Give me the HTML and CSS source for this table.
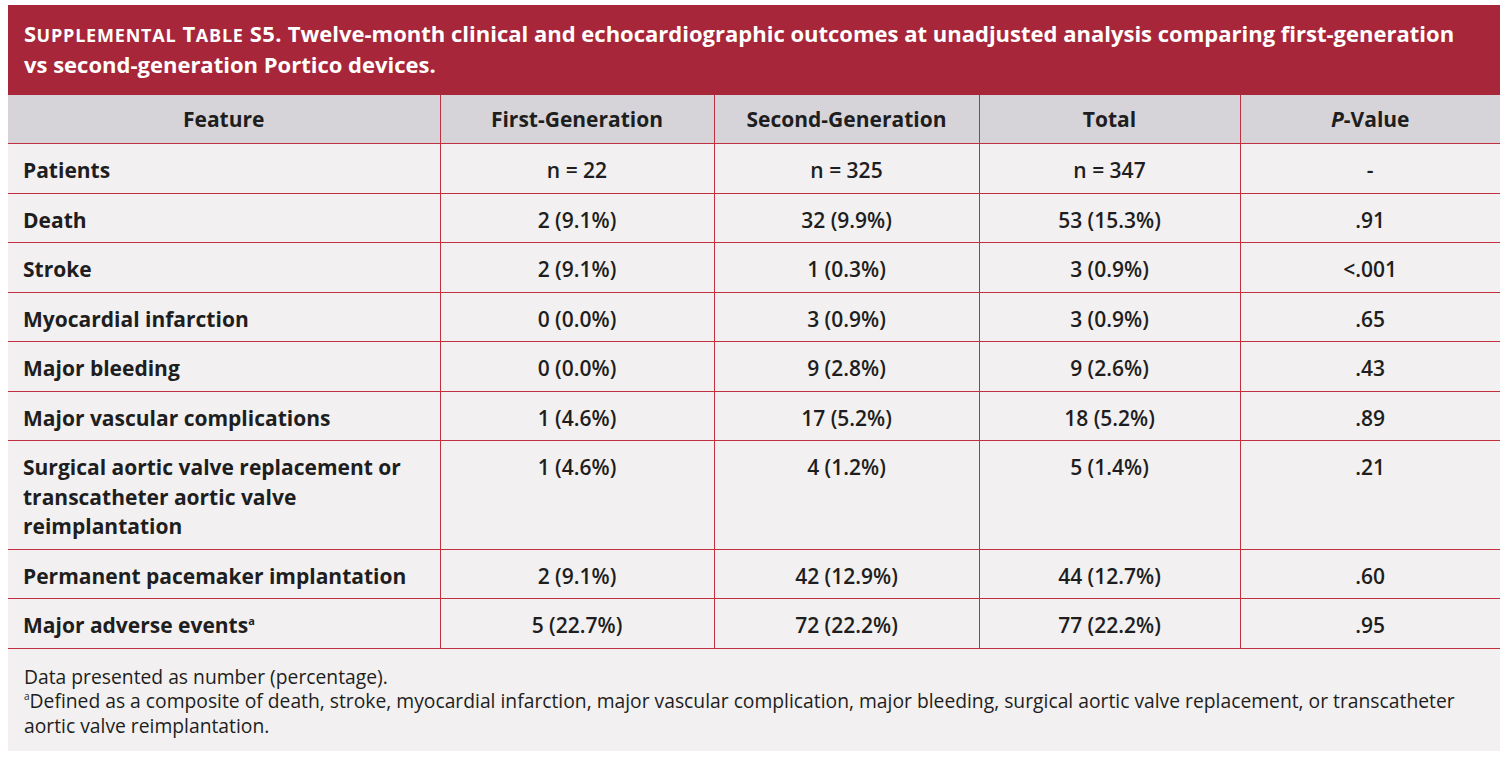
FILE: index.html
```html
<!DOCTYPE html>
<html lang="en">
<head>
<meta charset="utf-8">
<title>Supplemental Table S5</title>
<link rel="stylesheet" href="styles.css">
</head>
<body>
<div class="panel">
  <div class="title"><span class="sc">S<small>UPPLEMENTAL</small> T<small>ABLE</small> S5.</span> Twelve-month clinical and echocardiographic outcomes at unadjusted analysis comparing first-generation vs second-generation Portico devices.</div>
  <table class="grid">
    <colgroup>
      <col class="c1"><col class="c2"><col class="c3"><col class="c4"><col class="c5">
    </colgroup>
    <thead>
      <tr><th>Feature</th><th>First-Generation</th><th>Second-Generation</th><th>Total</th><th><i>P</i>-Value</th></tr>
    </thead>
    <tbody>
      <tr class="first"><td class="lab">Patients</td><td>n = 22</td><td>n = 325</td><td>n = 347</td><td>-</td></tr>
      <tr><td class="lab">Death</td><td>2 (9.1%)</td><td>32 (9.9%)</td><td>53 (15.3%)</td><td>.91</td></tr>
      <tr><td class="lab">Stroke</td><td>2 (9.1%)</td><td>1 (0.3%)</td><td>3 (0.9%)</td><td>&lt;.001</td></tr>
      <tr><td class="lab">Myocardial infarction</td><td>0 (0.0%)</td><td>3 (0.9%)</td><td>3 (0.9%)</td><td>.65</td></tr>
      <tr><td class="lab">Major bleeding</td><td>0 (0.0%)</td><td>9 (2.8%)</td><td>9 (2.6%)</td><td>.43</td></tr>
      <tr><td class="lab">Major vascular complications</td><td>1 (4.6%)</td><td>17 (5.2%)</td><td>18 (5.2%)</td><td>.89</td></tr>
      <tr><td class="lab">Surgical aortic valve replacement or transcatheter aortic valve reimplantation</td><td>1 (4.6%)</td><td>4 (1.2%)</td><td>5 (1.4%)</td><td>.21</td></tr>
      <tr><td class="lab">Permanent pacemaker implantation</td><td>2 (9.1%)</td><td>42 (12.9%)</td><td>44 (12.7%)</td><td>.60</td></tr>
      <tr><td class="lab">Major adverse events<sup>a</sup></td><td>5 (22.7%)</td><td>72 (22.2%)</td><td>77 (22.2%)</td><td>.95</td></tr>
    </tbody>
  </table>
  <div class="notes">
    <p>Data presented as number (percentage).</p>
    <p><sup>a</sup>Defined as a composite of death, stroke, myocardial infarction, major vascular complication, major bleeding, surgical aortic valve replacement, or transcatheter aortic valve reimplantation.</p>
  </div>
</div>
</body>
</html>
```

FILE: styles.css
```css
html, body { background: #ffffff; }
body {
  margin: 5px 8px;
  font-family: "Open Sans", "Noto Sans", sans-serif;
  color: #1e1e20;
}
.panel {
  width: 1492px;
  background: #f2f0f1;
}
.title {
  background: #a8263a;
  color: #ffffff;
  font-weight: 700;
  font-size: 22px;
  line-height: 29px;
  padding: 14px 36px 18px 16px;
  height: 58px;
}
.sc { letter-spacing: 0.4px; }
.sc small { font-size: 18px; letter-spacing: 0.8px; }
.grid {
  width: 1492px;
  border-collapse: collapse;
  table-layout: fixed;
}
.c1 { width: 432px; }
.c2 { width: 274px; }
.c3 { width: 265px; }
.c4 { width: 261px; }
.c5 { width: 260px; }
.grid th, .grid td {
  border: 1px solid #c2303f;
  font-size: 21px;
  line-height: 29.5px;
  text-align: center;
  vertical-align: top;
}
.grid tr > :first-child { border-left: none; }
.grid tr > :last-child { border-right: none; }
.grid thead tr > th { border-top: none; }
.grid th {
  background: #d6d4d8;
  font-weight: 700;
  height: 48px;
  padding: 10px 10px 8px;
  box-sizing: border-box;
}
.grid td {
  padding: 12px 10px 7px;
  font-weight: 600;
  height: 49px;
  box-sizing: border-box;
}
.grid tr.first td { height: 50px; }
.grid td.lab {
  text-align: left;
  padding-left: 15px;
  padding-right: 20px;
  font-weight: 700;
}
sup { font-size: 11px; vertical-align: 8px; line-height: 0; }
.notes sup { font-size: 10px; }
.notes {
  padding: 16px 16px 13px;
  font-size: 19.3px;
  line-height: 24.5px;
}
.notes p { margin: 0; }
```
